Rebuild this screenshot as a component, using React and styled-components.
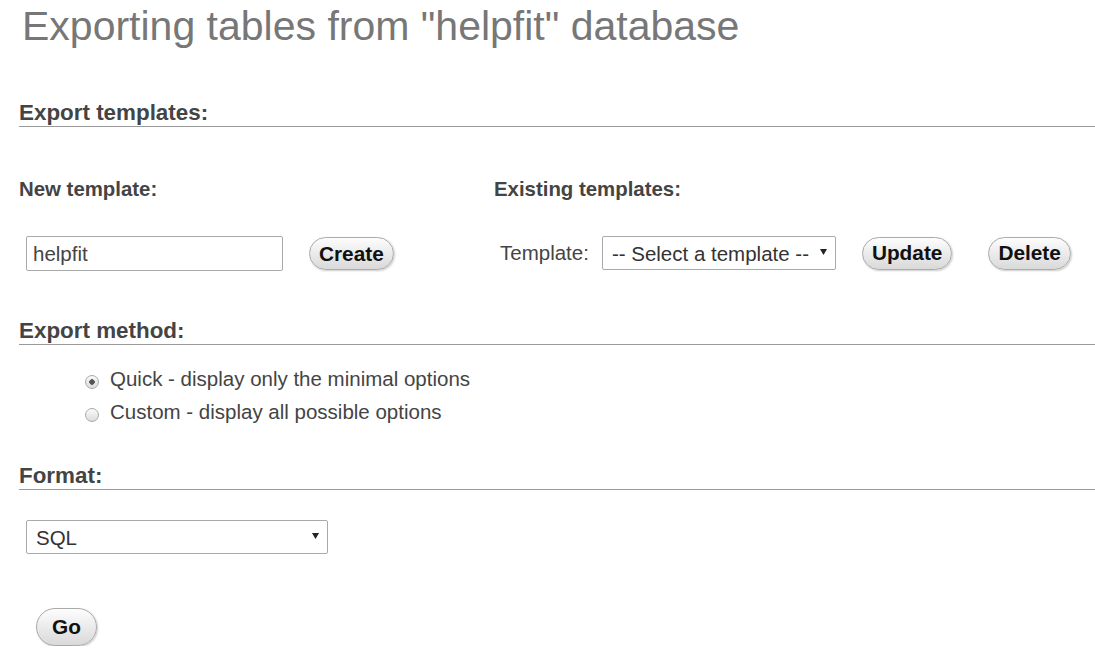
import styled, { createGlobalStyle } from "styled-components";

const GlobalStyle = createGlobalStyle`
  body {
    margin: 0;
    background: #fff;
    font-family: "Liberation Sans", Arial, sans-serif;
    color: #444;
  }
`;

function Arrow() {
  return (
    <svg width="7" height="6" viewBox="0 0 7 6">
      <polygon points="0,0 7,0 3.5,6" fill="#222" />
    </svg>
  );
}

function Select({ width, children }) {
  return (
    <StSelectWrap $width={width}>
      <StSelect defaultValue="">{children}</StSelect>
      <StArrow>
        <Arrow />
      </StArrow>
    </StSelectWrap>
  );
}

function Radio({ checked, label }) {
  return (
    <StRadioRow>
      <StRadioDot $checked={checked} />
      <span>{label}</span>
    </StRadioRow>
  );
}

function App() {
  return (
    <>
      <GlobalStyle />
      <StPage>
        <StTitle>Exporting tables from "helpfit" database</StTitle>

        <StSection $top={51}>Export templates:</StSection>
        <StTemplates>
          <StColumn $width={475}>
            <StSubHead>New template:</StSubHead>
            <StControls $indent={7}>
              <StInput defaultValue="helpfit" />
              <StButton $gap={26}>Create</StButton>
            </StControls>
          </StColumn>
          <StColumn>
            <StSubHead>Existing templates:</StSubHead>
            <StControls $indent={6}>
              <StLabel>Template:</StLabel>
              <Select width={234}>
                <option value="">-- Select a template --</option>
              </Select>
              <StButton $gap={26}>Update</StButton>
              <StButton $gap={36}>Delete</StButton>
            </StControls>
          </StColumn>
        </StTemplates>

        <StSection $top={48}>Export method:</StSection>
        <StRadioList>
          <Radio checked label="Quick - display only the minimal options" />
          <Radio label="Custom - display all possible options" />
        </StRadioList>

        <StSection $top={40}>Format:</StSection>
        <StFormatRow>
          <Select width={302}>
            <option value="">SQL</option>
          </Select>
        </StFormatRow>

        <StGoRow>
          <StButton $tall>Go</StButton>
        </StGoRow>
      </StPage>
    </>
  );
}

export default App;

const StPage = styled.div`
  padding-left: 19px;
  display: flex;
  flex-direction: column;
`;

const StTitle = styled.h2`
  margin: 2px 0 0 3px;
  font-size: 41px;
  line-height: 48px;
  font-weight: normal;
  color: #777;
`;

const StSection = styled.div`
  margin-top: ${(p) => p.$top}px;
  font-size: 22.4px;
  line-height: 24px;
  font-weight: bold;
  color: #444;
  padding-bottom: 1px;
  border-bottom: 1px solid #9a9a9a;
`;

const StTemplates = styled.div`
  display: flex;
  margin-top: 51px;
`;

const StColumn = styled.div`
  display: flex;
  flex-direction: column;
  width: ${(p) => (p.$width ? `${p.$width}px` : "auto")};
`;

const StSubHead = styled.div`
  font-size: 20.4px;
  line-height: 22px;
  font-weight: bold;
  color: #444;
`;

const StControls = styled.div`
  display: flex;
  align-items: center;
  margin: 36px 0 0 ${(p) => p.$indent}px;
`;

const StInput = styled.input`
  box-sizing: border-box;
  width: 257px;
  height: 35px;
  padding: 0 6px;
  border: 1px solid #aaa;
  border-radius: 2px;
  font-family: "Liberation Sans", Arial, sans-serif;
  font-size: 20.5px;
  color: #444;
  outline: none;
`;

const StLabel = styled.span`
  font-size: 20.5px;
  color: #444;
  margin-right: 13px;
`;

const StSelectWrap = styled.div`
  position: relative;
  width: ${(p) => p.$width}px;
  height: 34px;
`;

const StSelect = styled.select`
  appearance: none;
  box-sizing: border-box;
  width: 100%;
  height: 100%;
  padding: 0 24px 0 9px;
  border: 1px solid #aaa;
  border-radius: 2px;
  background: #fff;
  font-family: "Liberation Sans", Arial, sans-serif;
  font-size: 20.5px;
  color: #333;
  outline: none;
`;

const StArrow = styled.span`
  position: absolute;
  right: 9px;
  top: 13px;
  display: flex;
  pointer-events: none;
`;

const StButton = styled.button`
  box-sizing: border-box;
  margin-left: ${(p) => p.$gap || 0}px;
  height: ${(p) => (p.$tall ? 38 : 33)}px;
  padding: 0 ${(p) => (p.$tall ? 15 : 9)}px;
  border: 1px solid #aaa;
  border-radius: 20px;
  background: linear-gradient(#fdfdfd, #d9d9d9);
  box-shadow: 1px 1px 2px #ccc;
  font-family: "Liberation Sans", Arial, sans-serif;
  font-size: 20.8px;
  font-weight: bold;
  color: #111;
`;

const StRadioList = styled.div`
  display: flex;
  flex-direction: column;
  gap: 9px;
  margin: 22px 0 0 66px;
`;

const StRadioRow = styled.label`
  display: flex;
  align-items: flex-start;
  gap: 11px;
  font-size: 20.5px;
  line-height: 24px;
  color: #444;
`;

const StRadioDot = styled.span`
  box-sizing: border-box;
  width: 14px;
  height: 14px;
  margin-top: 8px;
  border: 1px solid #aaa;
  border-radius: 50%;
  background: ${(p) =>
    p.$checked
      ? "radial-gradient(circle, #555 0 2.5px, transparent 3px), linear-gradient(#fafafa, #dcdcdc)"
      : "linear-gradient(#fafafa, #dcdcdc)"};
`;

const StFormatRow = styled.div`
  display: flex;
  margin: 30px 0 0 7px;
`;

const StGoRow = styled.div`
  display: flex;
  margin: 54px 0 0 17px;
`;
